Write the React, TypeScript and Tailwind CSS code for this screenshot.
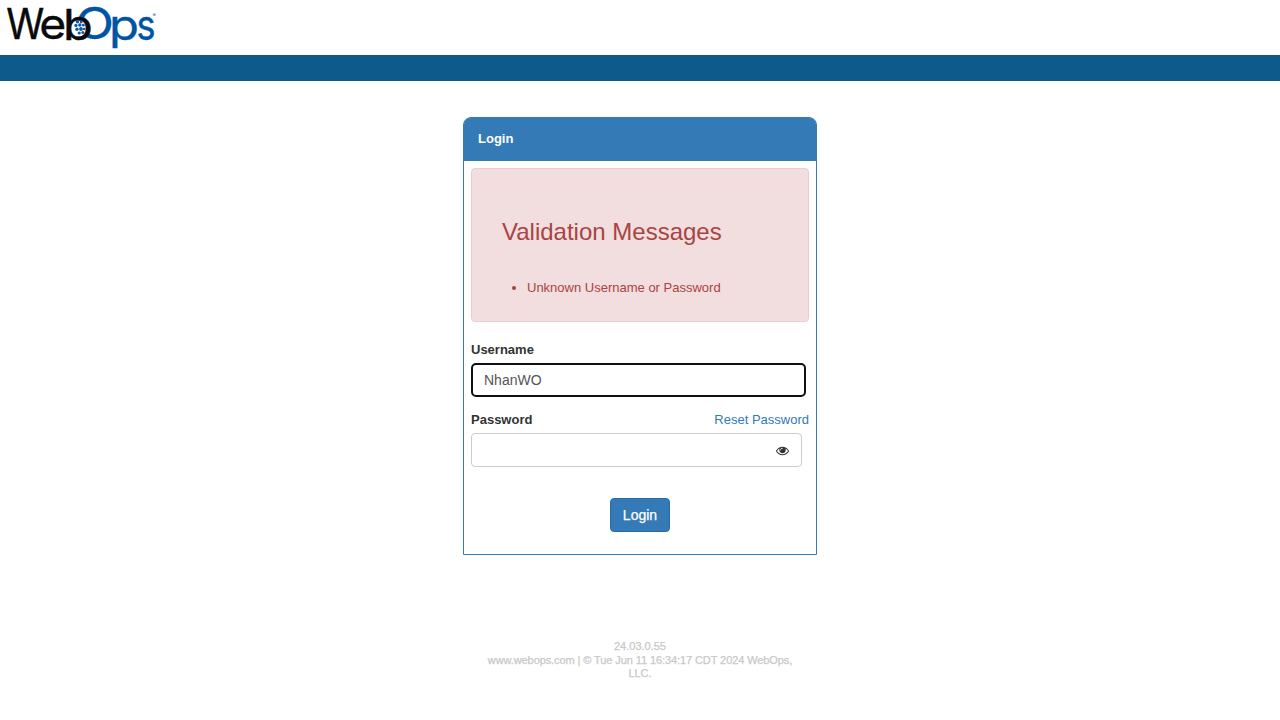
function Logo() {
  return (
    <svg className="block overflow-visible" width="160" height="55" viewBox="0 0 160 55" fontFamily="Inter, sans-serif" fontSize="42">
      <g fill="#0a0a0a" stroke="#0a0a0a" strokeWidth="0.4">
        <text x="6.3" y="39" textLength="38" lengthAdjust="spacingAndGlyphs" fontSize="42.5">W</text>
        <text x="39.3" y="39.4" textLength="27" lengthAdjust="spacingAndGlyphs" fontSize="41.5">e</text>
      </g>
      <text x="75.2" y="39.3" textLength="38.7" lengthAdjust="spacingAndGlyphs" fill="#0054a4" stroke="#0054a4" strokeWidth="0.4" fontSize="43.5">O</text>
      <circle cx="78.8" cy="28" r="11" fill="#fff" />
      <text x="63" y="39.5" textLength="29.8" lengthAdjust="spacingAndGlyphs" fill="#0a0a0a" stroke="#0a0a0a" strokeWidth="0.5" fontSize="42.5">b</text>
      <g fill="#0a5aa8">
        <circle cx="77.4" cy="21.8" r="1.7" />
        <circle cx="81.2" cy="22" r="1.4" />
        <circle cx="75.9" cy="25.4" r="1.6" />
        <circle cx="79.8" cy="25" r="1.7" />
        <circle cx="83.3" cy="25.2" r="1.4" />
        <circle cx="77" cy="29.3" r="1.7" />
        <circle cx="81" cy="29" r="1.9" />
        <circle cx="84.2" cy="29" r="1.3" />
        <circle cx="79.2" cy="33" r="1.6" />
        <circle cx="82.8" cy="32.6" r="1.5" />
      </g>
      <g fill="#0054a4" stroke="#0054a4" strokeWidth="0.4">
        <text x="109" y="39.5" textLength="30" lengthAdjust="spacingAndGlyphs">p</text>
        <text x="136.5" y="39.5" textLength="19" lengthAdjust="spacingAndGlyphs">s</text>
      </g>
      <text x="152.5" y="16.5" fontSize="5" fill="#0054a4">®</text>
    </svg>
  );
}

function EyeIcon() {
  return (
    <svg width="13" height="13" viewBox="0 0 1792 1792" fill="#333">
      <path d="M1664 960q-152-236-381-353 61 104 61 225 0 185-131.5 316.5t-316.5 131.5-316.5-131.5-131.5-316.5q0-121 61-225-229 117-381 353 133 205 333.5 326.5t434.5 121.5 434.5-121.5 333.5-326.5zm-720-384q0-20-14-34t-34-14q-125 0-214.5 89.5t-89.5 214.5q0 20 14 34t34 14 34-14 14-34q0-86 61-147t147-61q20 0 34-14t14-34zm848 384q0 34-20 69-140 230-376.5 368.5t-499.5 138.5-499.5-139-376.5-368q-20-35-20-69t20-69q140-229 376.5-368t499.5-139 499.5 139 376.5 368q20 35 20 69z" />
    </svg>
  );
}

export default function App() {
  return (
    <div className="flex h-[720px] flex-col items-center overflow-hidden bg-white font-['Liberation_Sans',Arial,sans-serif] text-[13px] leading-[18px] text-[#333]">
      <header className="h-[55px] w-full">
        <Logo />
      </header>
      <div className="h-[26px] w-full bg-[#0e5a8a]" />

      <main className="mt-9 h-[438px] w-[354px] rounded-t-lg border border-[#337ab7]">
        <h1 className="flex h-[43px] items-center rounded-t-[6px] bg-[#337ab7] px-3.5 pb-0.5 font-bold text-white">Login</h1>
        <form className="px-[7px] pt-[7px]" onSubmit={(e) => e.preventDefault()}>
          <section className="h-[154px] rounded border border-[#ebccd1] bg-[#f2dede] pt-[50px] pl-[30px] text-[#a94442]">
            <h2 className="text-[24px] leading-[26px]">Validation Messages</h2>
            <ul className="mt-[34px] list-disc pl-[25px]">
              <li>Unknown Username or Password</li>
            </ul>
          </section>

          <label htmlFor="username" className="mt-[19px] block font-bold">Username</label>
          <input
            id="username"
            defaultValue="NhanWO"
            className="mt-1 block h-[34px] w-[335px] rounded-[5px] border-2 border-[#101010] px-[11px] text-[14px] text-[#555] outline-none"
          />

          <div className="mt-3.5 flex justify-between">
            <label htmlFor="password" className="font-bold">Password</label>
            <a href="#reset" className="text-[#337ab7]">Reset Password</a>
          </div>
          <div className="mt-1 flex h-[34px] w-[331px] items-center rounded border border-[#ccc] pr-3">
            <input id="password" type="password" className="h-full flex-1 px-3 text-[14px] outline-none" />
            <EyeIcon />
          </div>

          <button className="mx-auto mt-[31px] block h-[34px] w-[60px] rounded border border-[#2e6da4] bg-[#337ab7] text-[14px] text-white [-webkit-text-stroke:0.25px_white]">
            Login
          </button>
        </form>
      </main>

      <footer className="mt-[85px] w-[310px] text-center text-[11px] leading-[13.5px] text-[#c8c8c8] [-webkit-text-stroke:0.25px_#c8c8c8]">
        <p>24.03.0.55</p>
        <p className="tracking-[-0.09px]">www.webops.com | © Tue Jun 11 16:34:17 CDT 2024 WebOps, LLC.</p>
      </footer>
    </div>
  );
}
